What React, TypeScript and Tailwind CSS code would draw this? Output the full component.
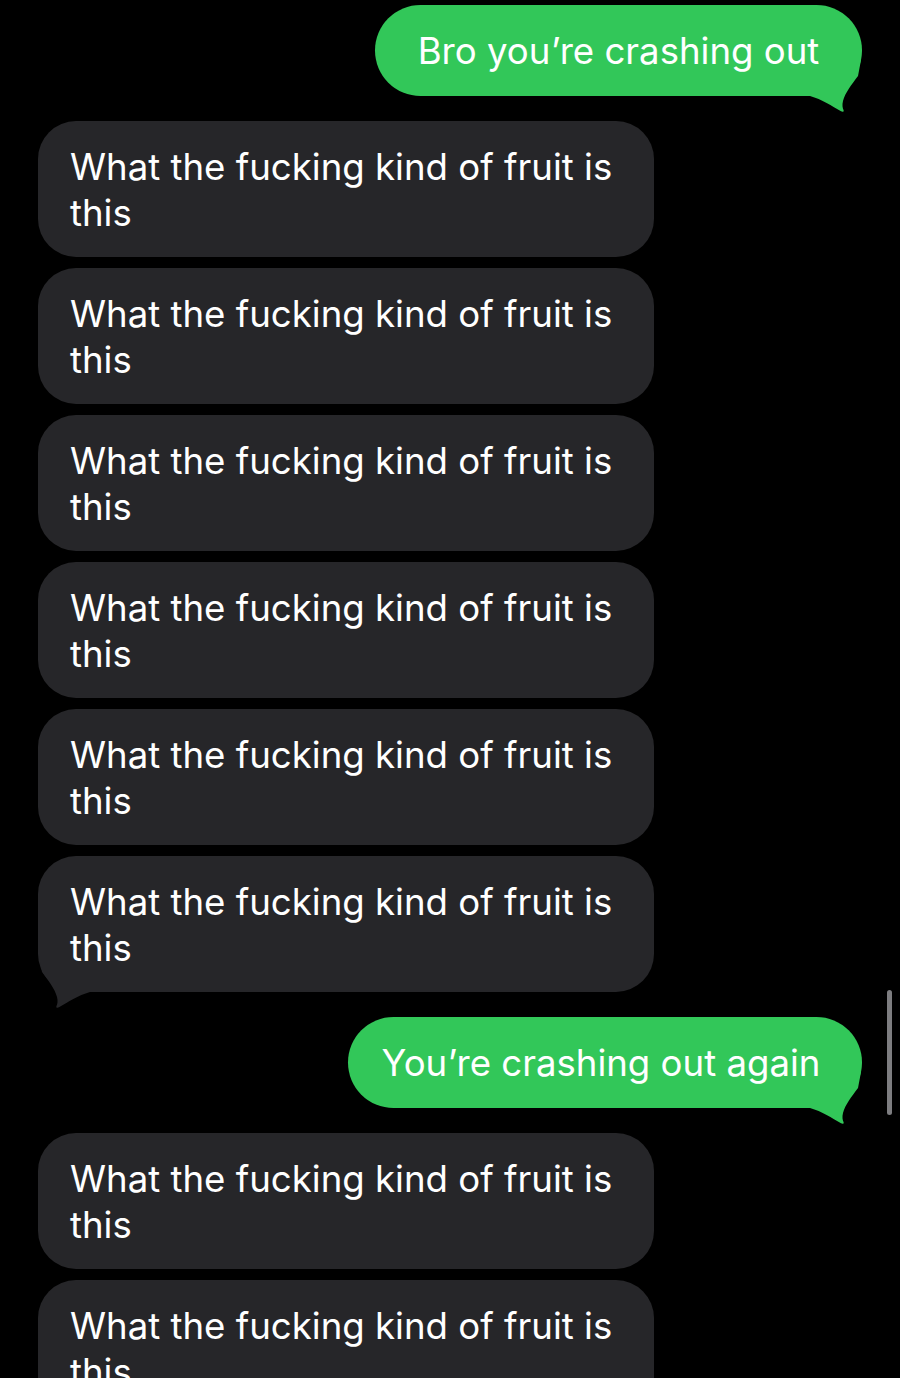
const FRUIT = 'What the fucking kind of fruit is this';

const Tail = ({ color, side }: { color: string; side: 'left' | 'right' }) => (
  <svg
    width="66"
    height="54"
    viewBox="0 0 66 54"
    className={
      side === 'right'
        ? 'absolute -right-[4px] -bottom-[18px]'
        : 'absolute -left-[4px] -bottom-[18px] -scale-x-100'
    }
  >
    <path
      d="M0 0 L61 0 L58 16 C52 24 45 33 43 41 C42 45 42.5 48 43.5 50 C44.2 51.6 43 52.3 41 51.3 C32 46 22 39.5 10 36 L0 36 Z"
      fill={color}
    />
  </svg>
);

const Sent = ({ text, width }: { text: string; width: string }) => (
  <div className="flex justify-end pr-[38px]">
    <div
      className={`relative flex h-[91px] items-center justify-center rounded-[46px] bg-[#32c759] pt-px text-white ${width}`}
    >
      <span className="relative z-10 block whitespace-nowrap">{text}</span>
      <Tail color="#32c759" side="right" />
    </div>
  </div>
);

const Received = ({ text, tail = false }: { text: string; tail?: boolean }) => (
  <div className="flex justify-start pl-[38px]">
    <div className="relative flex h-[136px] w-[616px] shrink-0 items-center rounded-[38px] bg-[#262629] px-[32px] pt-[2px] text-white">
      <span className="relative z-10 block pr-[6px]">{text}</span>
      {tail && <Tail color="#262629" side="left" />}
    </div>
  </div>
);

export default function App() {
  return (
    <div
      className="relative h-[1378px] w-[900px] overflow-hidden bg-black pt-[5px] text-[36.6px] leading-[46px]"
      style={{ fontFamily: 'Inter, "Noto Sans", sans-serif' }}
    >
      <div className="flex flex-col">
        <Sent text="Bro you’re crashing out" width="w-[487px]" />
        <div className="mt-[25px] flex flex-col gap-[11px]">
          {[0, 1, 2, 3, 4, 5].map((i) => (
            <Received key={i} text={FRUIT} tail={i === 5} />
          ))}
        </div>
        <div className="mt-[25px]">
          <Sent text="You’re crashing out again" width="w-[514px] pr-[8px]" />
        </div>
        <div className="mt-[25px] flex flex-col gap-[11px]">
          <Received text={FRUIT} />
          <Received text={FRUIT} />
        </div>
      </div>

      {/* scroll indicator */}
      <div className="absolute left-[887px] top-[990px] h-[125px] w-[5px] rounded-full bg-[#7d7d80]" />
    </div>
  );
}
